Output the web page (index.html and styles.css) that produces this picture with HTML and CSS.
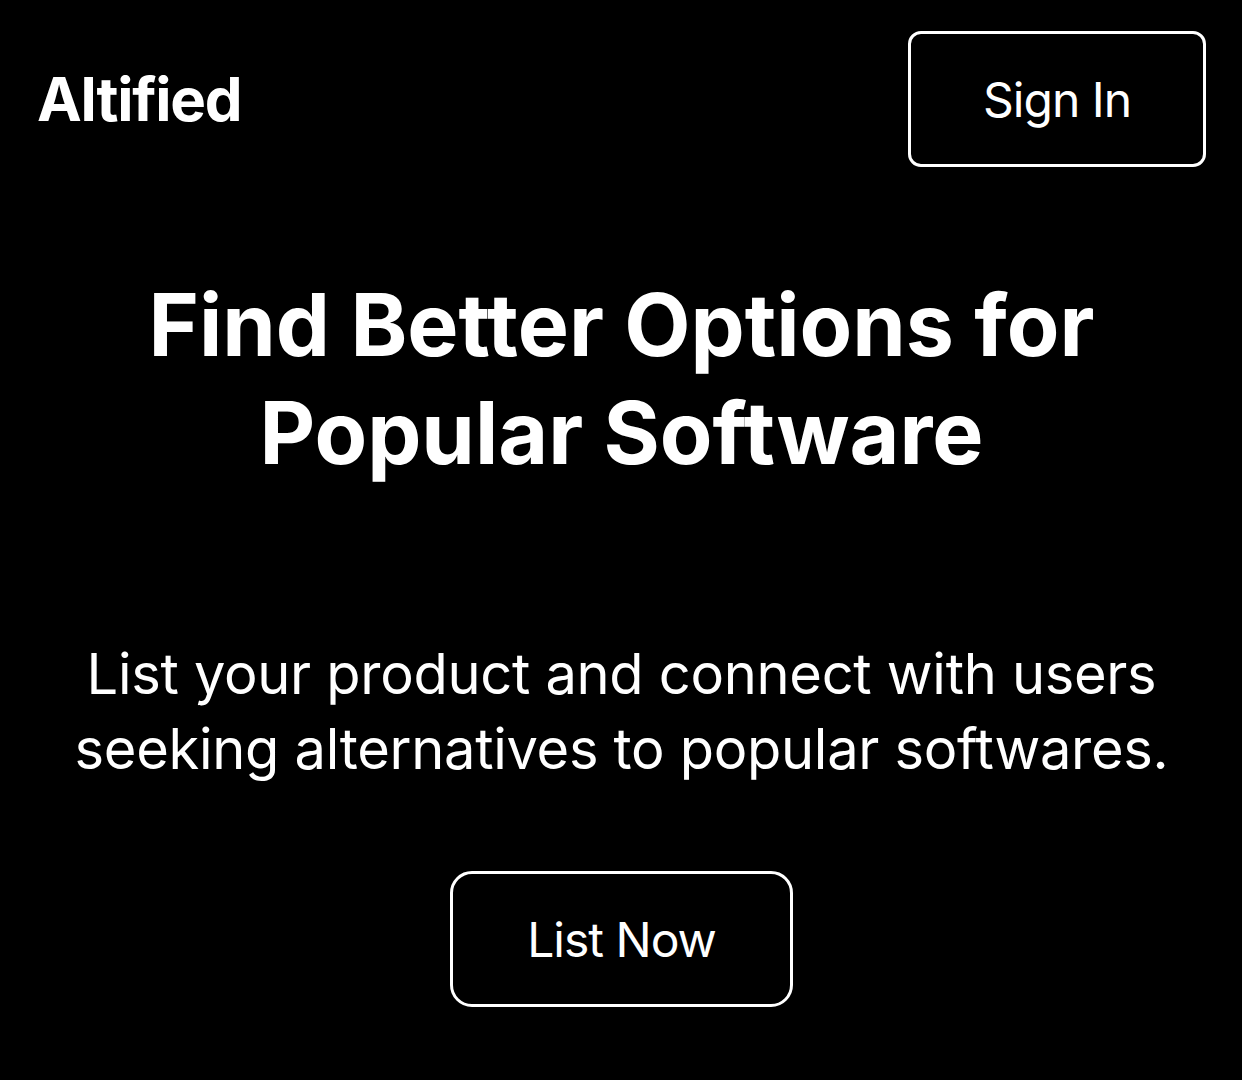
FILE: index.html
```html
<!DOCTYPE html>
<html lang="en">
<head>
<meta charset="utf-8">
<title>Altified</title>
<link rel="stylesheet" href="styles.css">
</head>
<body>
<div class="page">
  <header class="topbar">
    <div class="logo">Altified</div>
    <button class="btn btn-signin">Sign In</button>
  </header>
  <main class="hero">
    <h1 class="title">Find Better Options for<br>Popular Software</h1>
    <p class="lead">List your product and connect with users<br>seeking alternatives to popular softwares.</p>
    <button class="btn btn-list">List Now</button>
  </main>
</div>
</body>
</html>
```
FILE: styles.css
```css
html, body {
  margin: 0;
  padding: 0;
  background: #000;
}
body {
  font-family: Inter, "Noto Sans", "Liberation Sans", sans-serif;
  color: #fff;
}
.page {
  padding: 31px 36px 0 37px;
}
.topbar {
  display: flex;
  justify-content: space-between;
  align-items: center;
}
.logo {
  font-size: 60px;
  font-weight: 700;
  letter-spacing: -1.25px;
}
.btn {
  background: #000;
  color: #fff;
  border: 3px solid #fff;
  font-family: inherit;
  font-size: 48px;
  font-weight: 400;
  letter-spacing: -1px;
  height: 136px;
  padding: 0 74px;
  display: flex;
  align-items: center;
  justify-content: center;
}
.btn-signin {
  border-radius: 13px;
  padding: 0 72px;
}
.btn-list {
  border-radius: 22px;
}
.hero {
  display: flex;
  flex-direction: column;
  align-items: center;
  text-align: center;
  padding-top: 104px;
}
.title {
  margin: 0;
  font-size: 86px;
  line-height: 108px;
  font-weight: 700;
}
.lead {
  margin: 150px 0 0;
  font-size: 56px;
  line-height: 75px;
  font-weight: 400;
  letter-spacing: -0.3px;
}
.btn-list {
  margin-top: 84px;
}
```
